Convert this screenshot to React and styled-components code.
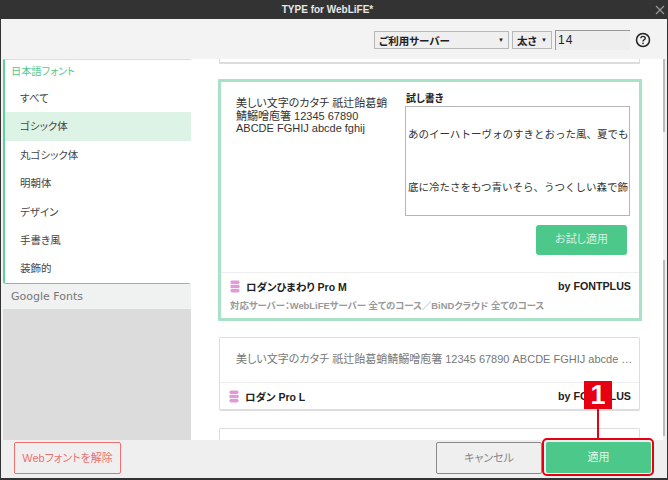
import React from "react";
import styled, { createGlobalStyle } from "styled-components";

const GlobalStyle = createGlobalStyle`
  html, body { margin: 0; padding: 0; background: #333; }
  * { box-sizing: border-box; }
  body {
    font-family: "Liberation Sans", "Noto Sans CJK JP", sans-serif;
    font-feature-settings: "palt";
  }
`;

const categories = ["すべて", "ゴシック体", "丸ゴシック体", "明朝体", "デザイン", "手書き風", "装飾的"];

const SAMPLE = "美しい文字のカタチ 祇辻飴葛蛸鯖鰯噌庖箸 12345 67890 ABCDE FGHIJ abcde fghij";

const DbIcon = () => (
  <svg width="10" height="13" viewBox="0 0 10 13">
    <rect x="0.5" y="0.5" width="9" height="3.4" rx="1.4" fill="#e09ad8" />
    <rect x="0.5" y="4.8" width="9" height="3.4" fill="#e09ad8" />
    <rect x="0.5" y="9.1" width="9" height="3.4" rx="1.4" fill="#e09ad8" />
  </svg>
);

const App = () => {
  return (
    <>
      <GlobalStyle />
      <Window>
        <TitleBar>
          TYPE for WebLiFE*
          <CloseIcon viewBox="0 0 10 10">
            <path d="M1 1 L9 9 M9 1 L1 9" stroke="#9a9a9a" strokeWidth="1.1" fill="none" />
          </CloseIcon>
        </TitleBar>

        <Toolbar>
          <SelectBox $width={135}>
            ご利用サーバー
            <Caret>▼</Caret>
          </SelectBox>
          <SelectBox $width={40}>
            太さ
            <Caret>▼</Caret>
          </SelectBox>
          <SizeInput>14</SizeInput>
          <HelpIcon viewBox="0 0 16 16">
            <circle cx="8" cy="8" r="6.5" stroke="#222" strokeWidth="1.5" fill="none" />
            <path d="M5.9 6.3 C5.9 3.7 10.2 3.7 10.2 6.2 C10.2 7.9 8 7.7 8 9.6" stroke="#222" strokeWidth="1.4" fill="none" />
            <rect x="7.3" y="10.6" width="1.4" height="1.5" fill="#222" />
          </HelpIcon>
        </Toolbar>

        <Body>
          <Sidebar>
            <CategoryPanel>
              <PanelTitle>日本語フォント</PanelTitle>
              {categories.map((name) => (
                <CategoryItem key={name} $active={name === "ゴシック体"}>
                  {name}
                </CategoryItem>
              ))}
            </CategoryPanel>
            <GoogleHead>Google Fonts</GoogleHead>
            <SidebarFill />
          </Sidebar>

          <ListArea>
            <ClippedCard />

            <SelectedCard>
              <PreviewRow>
                <SampleText>{SAMPLE}</SampleText>
                <TrialColumn>
                  <TrialLabel>試し書き</TrialLabel>
                  <TrialBox>
                    <TrialLine>あのイーハトーヴォのすきとおった風、夏でも</TrialLine>
                    <TrialLine>底に冷たさをもつ青いそら、うつくしい森で飾</TrialLine>
                  </TrialBox>
                  <TrialButton>お試し適用</TrialButton>
                </TrialColumn>
              </PreviewRow>
              <CardFooter>
                <NameRow>
                  <FontName>
                    <DbIcon />
                    ロダンひまわり Pro M
                  </FontName>
                  <Vendor>by FONTPLUS</Vendor>
                </NameRow>
                <ServerNote>対応サーバー：WebLiFEサーバー 全てのコース／BiNDクラウド 全てのコース</ServerNote>
              </CardFooter>
            </SelectedCard>

            <Card>
              <OneLineSample>{SAMPLE}</OneLineSample>
              <CardFooter>
                <NameRow>
                  <FontName>
                    <DbIcon />
                    ロダン Pro L
                  </FontName>
                  <Vendor>by FONTPLUS</Vendor>
                </NameRow>
              </CardFooter>
            </Card>

            <Card />
            <ScrollTrack>
              <ScrollThumb $height={73} />
              <ScrollThumb $height={176} $gap={128} />
            </ScrollTrack>
          </ListArea>
        </Body>

        <Footer>
          <RemoveButton>Webフォントを解除</RemoveButton>
          <FooterRight>
            <CancelButton>キャンセル</CancelButton>
            <ApplyButton>適用</ApplyButton>
          </FooterRight>
        </Footer>

        <Callout>
          <CalloutBadge>1</CalloutBadge>
          <CalloutLine />
          <CalloutFrame />
        </Callout>
      </Window>
    </>
  );
};

export default App;

const Window = styled.div`
  position: relative;
  width: 668px;
  height: 480px;
  display: flex;
  flex-direction: column;
  overflow: hidden;
  background: #f3f3f3;
  border-left: 1px solid #333;
  border-right: 1px solid #333;
  border-bottom: 2px solid #333;
`;

const TitleBar = styled.div`
  position: relative;
  flex: none;
  height: 19px;
  padding-right: 13px;
  line-height: 19px;
  text-align: center;
  background: #333;
  color: #e8e8e8;
  font-size: 10px;
  font-weight: bold;
`;

const CloseIcon = styled.svg`
  position: absolute;
  right: 2px;
  top: 5px;
  width: 10px;
  height: 10px;
`;

const Toolbar = styled.div`
  flex: none;
  height: 40px;
  display: flex;
  align-items: center;
  padding: 2px 15px 0 373px;
  background: #f3f3f3;
`;

const SelectBox = styled.div`
  width: ${(p) => p.$width}px;
  height: 18px;
  margin-right: 3px;
  padding: 0 4px;
  display: flex;
  align-items: center;
  justify-content: space-between;
  background: #efefef;
  border: 1px solid #b8b8b8;
  font-size: 10.5px;
  font-weight: bold;
  color: #222;
`;

const Caret = styled.span`
  font-size: 6px;
  font-weight: normal;
  color: #222;
`;

const SizeInput = styled.div`
  width: 75px;
  height: 20px;
  padding: 1px 2px;
  background: #eee;
  border-left: 1px solid #999;
  border-top: 1px solid #999;
  font-size: 12px;
  line-height: 17px;
  letter-spacing: 1px;
  color: #222;
`;

const HelpIcon = styled.svg`
  width: 16px;
  height: 16px;
  margin-left: 5px;
  flex: none;
`;

const Body = styled.div`
  flex: 1;
  min-height: 0;
  display: flex;
  background: #fff;
  border-left: 2px solid #f3f3f3;
`;

const Sidebar = styled.div`
  flex: none;
  width: 188px;
  display: flex;
  flex-direction: column;
  background: #f0f1f1;
`;

const CategoryPanel = styled.div`
  height: 225px;
  background: #fff;
  border-left: 2px solid #5fcf9c;
  border-bottom: 1px solid #aaa;
  border-bottom-left-radius: 3px;
  border-bottom-right-radius: 3px;
  border-top: 1px solid #ddd;
`;

const PanelTitle = styled.div`
  height: 24px;
  padding-left: 6px;
  line-height: 23px;
  font-size: 10.2px;
  color: #4fc78f;
`;

const CategoryItem = styled.div`
  height: 28.4px;
  line-height: 28.4px;
  padding-left: 15px;
  font-size: 10.5px;
  color: #444;
  background: ${(p) => (p.$active ? "#dcf3e6" : "#fff")};
`;

const GoogleHead = styled.div`
  flex: none;
  height: 25px;
  line-height: 26px;
  padding-left: 8px;
  font-family: "DejaVu Sans", sans-serif;
  font-size: 11px;
  color: #777;
`;

const SidebarFill = styled.div`
  flex: 1;
  background: #dcdcdc;
`;

const ListArea = styled.div`
  position: relative;
  flex: 1;
  min-width: 0;
  overflow: hidden;
  padding-left: 28px;
  background: #fff;
`;

const ClippedCard = styled.div`
  width: 421px;
  height: 5px;
  margin-bottom: 15px;
  background: #fff;
  border: 1px solid #ddd;
  border-top: none;
  border-bottom-width: 2px;
`;

const SelectedCard = styled.div`
  width: 424px;
  height: 242px;
  margin: 0 0 16px -1px;
  display: flex;
  flex-direction: column;
  background: #fff;
  border: 3px solid #a9e2c6;
`;

const PreviewRow = styled.div`
  flex: 1;
  display: flex;
  justify-content: space-between;
  padding: 10px 9px 0 15px;
`;

const SampleText = styled.div`
  width: 155px;
  margin-top: 5px;
  font-size: 11px;
  line-height: 12.5px;
  color: #333;
`;

const TrialColumn = styled.div`
  width: 225px;
  display: flex;
  flex-direction: column;
  align-items: flex-end;
`;

const TrialLabel = styled.div`
  align-self: flex-start;
  height: 14px;
  padding-left: 1px;
  font-size: 10px;
  font-weight: bold;
  line-height: 13px;
  color: #222;
`;

const TrialBox = styled.div`
  width: 225px;
  height: 110px;
  padding-top: 15px;
  border: 1px solid #b5b5b5;
  overflow: hidden;
`;

const TrialLine = styled.div`
  height: 53px;
  padding-left: 2px;
  font-size: 10.5px;
  font-feature-settings: normal;
  line-height: 24px;
  white-space: nowrap;
  color: #333;
`;

const TrialButton = styled.div`
  width: 91px;
  height: 30px;
  margin: 9px 3px 0 0;
  line-height: 28px;
  text-align: center;
  font-size: 11px;
  color: #d5f3e4;
  background: #4bc88a;
  border-radius: 3px;
`;

const CardFooter = styled.div`
  flex: none;
  padding: 2px 8px 2px 9px;
  border-top: 1px solid #eee;
`;

const NameRow = styled.div`
  height: 22px;
  display: flex;
  align-items: center;
  justify-content: space-between;
`;

const FontName = styled.div`
  display: flex;
  align-items: center;
  gap: 6px;
  font-size: 10.5px;
  font-weight: bold;
  color: #222;
`;

const Vendor = styled.div`
  font-size: 10.7px;
  font-weight: bold;
  color: #222;
`;

const ServerNote = styled.div`
  height: 19px;
  line-height: 17px;
  font-size: 9.4px;
  font-weight: bold;
  color: #999;
  white-space: nowrap;
`;

const Card = styled.div`
  width: 421px;
  height: 74px;
  margin-bottom: 17px;
  display: flex;
  flex-direction: column;
  background: #fff;
  border: 1px solid #ddd;
  border-bottom-width: 2px;
  border-radius: 2px;
`;

const OneLineSample = styled.div`
  flex: 1;
  min-height: 0;
  padding: 11px 6px 0 16px;
  font-size: 11px;
  line-height: 20px;
  color: #777;
  white-space: nowrap;
  overflow: hidden;
  text-overflow: ellipsis;
`;

const ScrollTrack = styled.div`
  position: absolute;
  right: 0;
  top: 0;
  bottom: 0;
  width: 4px;
  background: #f0f0f0;
`;

const ScrollThumb = styled.div`
  width: 2px;
  height: ${(p) => p.$height}px;
  margin-top: ${(p) => p.$gap || 0}px;
  background: #bbb;
`;

const Footer = styled.div`
  flex: none;
  height: 38px;
  display: flex;
  align-items: flex-start;
  justify-content: space-between;
  padding: 2px 16px 0 13px;
  background: #efefef;
`;

const FooterRight = styled.div`
  display: flex;
  gap: 4px;
`;

const RemoveButton = styled.div`
  width: 107px;
  height: 32px;
  line-height: 30px;
  text-align: center;
  font-size: 11px;
  color: #f07070;
  border: 1px solid #f07070;
  border-radius: 2px;
`;

const CancelButton = styled.div`
  width: 106px;
  height: 32px;
  line-height: 30px;
  text-align: center;
  font-size: 11px;
  color: #888;
  border: 1px solid #8a8a8a;
  border-radius: 2px;
`;

const ApplyButton = styled.div`
  width: 105px;
  height: 31px;
  line-height: 31px;
  text-align: center;
  font-size: 11px;
  color: #e4f7ee;
  background: #4bc88a;
  border-radius: 2px;
`;

const Callout = styled.div`
  position: absolute;
  left: 541px;
  top: 381px;
  width: 112px;
  height: 95px;
  display: flex;
  flex-direction: column;
  align-items: center;
`;

const CalloutBadge = styled.div`
  flex: none;
  width: 28px;
  height: 28px;
  line-height: 28px;
  text-align: center;
  font-family: "Liberation Sans", sans-serif;
  font-size: 27px;
  font-weight: bold;
  color: #fff;
  background: #e60012;
`;

const CalloutLine = styled.div`
  flex: none;
  width: 2px;
  height: 29px;
  background: #e60012;
`;

const CalloutFrame = styled.div`
  flex: 1;
  width: 100%;
  border: 2px solid #e60012;
  border-radius: 5px;
`;
